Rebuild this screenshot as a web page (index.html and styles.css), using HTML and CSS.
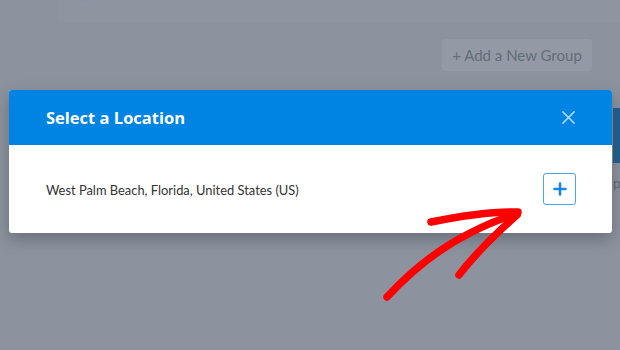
FILE: index.html
```html
<!DOCTYPE html>
<html>
<head>
<meta charset="utf-8">
<link rel="stylesheet" href="styles.css">
</head>
<body>
<div class="page">
  <div class="top-card"><span class="top-mark"></span></div>
  <div class="group-row">
    <button class="group-btn">+ Add a New Group</button>
  </div>
  <div class="behind-row">
    <div class="behind-col">
      <div class="behind-btn"></div>
      <div class="behind-text">p</div>
    </div>
  </div>

  <div class="modal">
    <div class="modal-head">
      <h2 class="modal-title">Select a Location</h2>
      <svg class="close-icon" width="14" height="14" viewBox="0 0 14 14"><path d="M1 1 L13 13 M13 1 L1 13" stroke="#a9d3f6" stroke-width="1.8" fill="none" stroke-linecap="round"/></svg>
    </div>
    <div class="modal-body">
      <span class="loc-text">West Palm Beach, Florida, United States (US)</span>
      <button class="add-btn">
        <svg width="14" height="14" viewBox="0 0 14 14"><path d="M7 1.5 V12.5 M1.5 7 H12.5" stroke="#1a86e0" stroke-width="2.6" fill="none" stroke-linecap="round"/></svg>
      </button>
    </div>
  </div>

  <svg class="arrow" width="620" height="350" viewBox="0 0 620 350">
    <g stroke="#ff0000" stroke-width="7.5" fill="none" stroke-linecap="round" stroke-linejoin="round">
      <path d="M387 297 C 412 270, 440 248, 470 233 S 505 218, 517 214"/>
      <path d="M431 222 C 460 216, 490 211, 518 212"/>
      <path d="M459 275 C 478 250, 500 230, 517 215"/>
    </g>
  </svg>
</div>
</body>
</html>
```

FILE: styles.css
```css
* { box-sizing: border-box; }
html, body { margin: 0; padding: 0; }
body {
  width: 620px;
  height: 350px;
  overflow: hidden;
  background: #8c939e;
  font-family: Lato, "Open Sans", sans-serif;
}
.page {
  position: relative;
  width: 620px;
  height: 350px;
}
.top-card {
  margin-left: 59px;
  height: 23px;
  background: #8e95a0;
  border-bottom-left-radius: 3px;
  position: relative;
}
.top-mark {
  position: absolute;
  left: 22px;
  top: 0;
  width: 6px;
  height: 1px;
  background: #7b99ad;
}
.group-row {
  display: flex;
  justify-content: flex-end;
  padding-right: 28px;
  margin-top: 16px;
}
.group-btn {
  font-family: Lato, sans-serif;
  font-size: 15px;
  color: #646d79;
  background: #939aa5;
  border: none;
  border-radius: 4px;
  height: 32px;
  width: 150px;
  padding: 0;
  text-align: center;
}
.behind-row {
  display: flex;
  margin-top: 37px;
  padding-left: 613px;
}
.behind-col {
  display: flex;
  flex-direction: column;
}
.behind-btn {
  width: 7px;
  height: 55px;
  background: #1f5e8e;
}
.behind-text {
  font-size: 14px;
  color: #5f6773;
  margin-top: 12px;
  line-height: 16px;
}
.modal {
  position: absolute;
  left: 9px;
  top: 90px;
  width: 603px;
  height: 143px;
  background: #fff;
  border-radius: 3px;
  overflow: hidden;
  box-shadow: 0 6px 16px rgba(60, 66, 78, 0.45);
}
.modal-head {
  height: 55px;
  background: #0084e3;
  display: flex;
  align-items: center;
  justify-content: space-between;
  padding: 0 37px 0 37px;
}
.modal-title {
  margin: 0;
  color: #fff;
  font-family: "Open Sans", sans-serif;
  font-size: 16.5px;
  font-weight: 700;
  line-height: 20px;
  padding-top: 0;
}
.close-icon { display: block; width: 13px; height: 13px; }
.modal-body {
  height: 88px;
  display: flex;
  align-items: center;
  justify-content: space-between;
  padding: 0 36px 0 37px;
}
.loc-text {
  font-size: 12.9px;
  color: #333;
  margin-top: 1px;
}
.add-btn {
  width: 33px;
  height: 32px;
  border: 1px solid #4aa5f2;
  border-radius: 3px;
  background: #fff;
  display: flex;
  align-items: center;
  justify-content: center;
  padding: 0;
}
.add-btn svg { display: block; }
.arrow {
  position: absolute;
  left: 0;
  top: 0;
  pointer-events: none;
}
```
